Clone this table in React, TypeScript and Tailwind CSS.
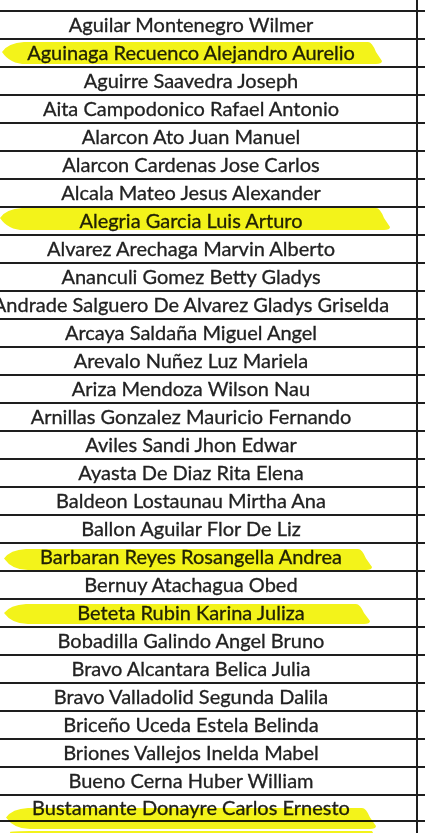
import React from "react";

type Row = { name: string; hl?: { x1: number; x2: number; y1: number; y2: number } };

const rows: Row[] = [
  { name: "Aguilar Montenegro Wilmer" },
  { name: "Aguinaga Recuenco Alejandro Aurelio", hl: { x1: 2, x2: 382, y1: 2, y2: 24 } },
  { name: "Aguirre Saavedra Joseph" },
  { name: "Aita Campodonico Rafael Antonio" },
  { name: "Alarcon Ato Juan Manuel" },
  { name: "Alarcon Cardenas Jose Carlos" },
  { name: "Alcala Mateo Jesus Alexander" },
  { name: "Alegria Garcia Luis Arturo", hl: { x1: 0, x2: 390, y1: 0, y2: 22 } },
  { name: "Alvarez Arechaga Marvin Alberto" },
  { name: "Ananculi Gomez Betty Gladys" },
  { name: "Andrade Salguero De Alvarez Gladys Griselda" },
  { name: "Arcaya Saldaña Miguel Angel" },
  { name: "Arevalo Nuñez Luz Mariela" },
  { name: "Ariza Mendoza Wilson Nau" },
  { name: "Arnillas Gonzalez Mauricio Fernando" },
  { name: "Aviles Sandi Jhon Edwar" },
  { name: "Ayasta De Diaz Rita Elena" },
  { name: "Baldeon Lostaunau Mirtha Ana" },
  { name: "Ballon Aguilar Flor De Liz" },
  { name: "Barbaran Reyes Rosangella Andrea", hl: { x1: 4, x2: 372, y1: 5, y2: 26 } },
  { name: "Bernuy Atachagua Obed" },
  { name: "Beteta Rubin Karina Juliza", hl: { x1: 4, x2: 370, y1: 4, y2: 24 } },
  { name: "Bobadilla Galindo Angel Bruno" },
  { name: "Bravo Alcantara Belica Julia" },
  { name: "Bravo Valladolid Segunda Dalila" },
  { name: "Briceño Uceda Estela Belinda" },
  { name: "Briones Vallejos Inelda Mabel" },
  { name: "Bueno Cerna Huber William" },
  { name: "Bustamante Donayre Carlos Ernesto", hl: { x1: 6, x2: 376, y1: 12, y2: 33 } },
];

function Highlight({ x1, x2, y1, y2 }: { x1: number; x2: number; y1: number; y2: number }) {
  const h = y2 - y1;
  const d = `M ${x1} ${y1 + h * 0.45} Q ${x1 + 6} ${y1 + 1} ${x1 + 22} ${y1} L ${x2 - 14} ${y1} Q ${x2 - 10} ${y1} ${x2 - 6} ${y1 + h * 0.45} L ${x2} ${y2 - 3} Q ${x2} ${y2} ${x2 - 6} ${y2} L ${x1 + 24} ${y2} Q ${x1 + 8} ${y2} ${x1} ${y1 + h * 0.45} Z`;
  return (
    <svg
      className="absolute left-0 top-0 pointer-events-none z-10 mix-blend-multiply [filter:blur(0.6px)]"
      width={425}
      height={40}
      style={{ overflow: "visible" }}
    >
      <path d={d} fill="#f3f31a" />
    </svg>
  );
}

export default function App() {
  return (
    <div
      className="w-[425px] h-[833px] overflow-hidden bg-white text-[#222222] relative isolate"
      style={{ fontFamily: "Lato, 'Open Sans', sans-serif" }}
    >
      <div className="flex h-[10px]">
        <div className="w-[418px] shrink-0 border-r-2 border-[#1e1e1e]" />
      </div>
      <div className="flex flex-col">
        {rows.map((r, i) => (
          <div
            key={i}
            className={`relative flex h-[28px] border-t-2 border-[#1e1e1e] ${i === rows.length - 1 ? "border-b-2" : ""}`}
          >
            {r.hl && <Highlight {...r.hl} />}
            <div className="relative -ml-[34px] w-[452px] shrink-0 flex items-center justify-center whitespace-nowrap border-r-2 border-[#1e1e1e] pb-[3px] text-[20px] leading-none [-webkit-text-stroke:0.3px_#222222]">
              <span>{r.name}</span>
            </div>
            <div className="flex-1" />
          </div>
        ))}
      </div>
      <div className="flex h-[20px]">
        <div className="relative w-[418px] shrink-0 border-r-2 border-[#1e1e1e]">
          <svg className="absolute left-0 top-0 mix-blend-multiply [filter:blur(0.6px)]" width={425} height={20}>
            <path d="M 10 10 Q 12 9 30 9 L 372 9 L 378 20 L 12 20 Z" fill="#f3f31a" />
          </svg>
        </div>
      </div>
    </div>
  );
}
